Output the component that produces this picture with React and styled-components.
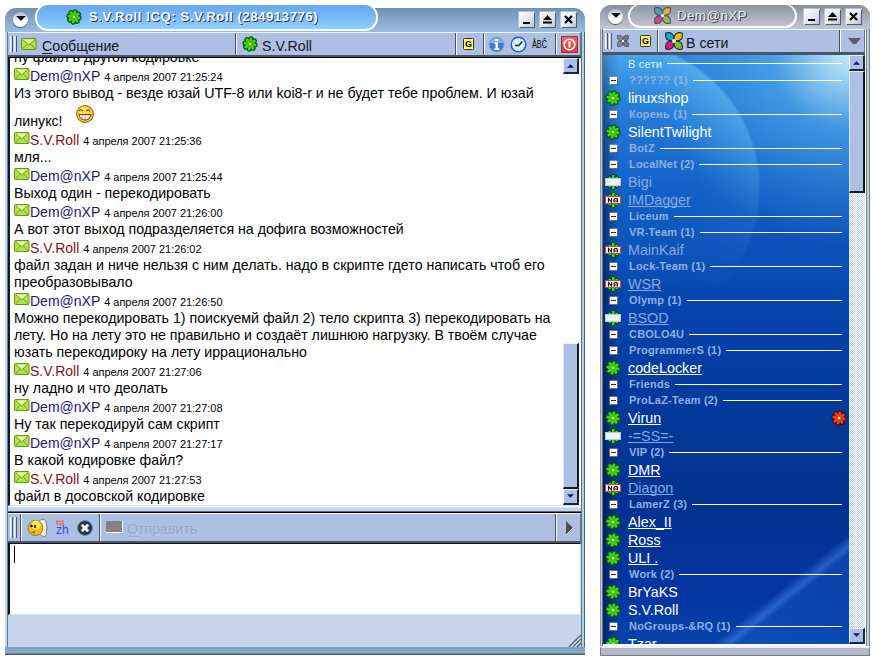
import React from "react";
import styled, { createGlobalStyle, css } from "styled-components";

const Global = createGlobalStyle`
  * { box-sizing: border-box; }
  body { margin: 0; background: #fff; font-family: "Liberation Sans", Arial, sans-serif; color: #000; }
`;

const Desktop = styled.main`
  display: flex;
  align-items: flex-start;
  width: 879px;
  height: 663px;
  padding: 5px 0 0 5px;
  overflow: hidden;
`;

const ChatWindow = styled.section`
  display: flex;
  flex-direction: column;
  width: 580px;
  height: 646px;
  margin-top: 3px;
  padding: 0 4px 0 3px;
  border-radius: 12px 12px 0 0;
  background: linear-gradient(90deg, #cfe2f2 0 1px, #b5d0e6 1px 2px, #5f82a0 2px 3px, transparent 3px 576px, #54778f 576px 577px, #b4cfe2 577px 579px, #456880 579px), #c6d6ec;
`;

const ChatTitle = styled.header`
  display: flex;
  align-items: center;
  flex: none;
  height: 24px;
  margin: 0 -4px 0 -3px;
  padding: 0 9px 0 8px;
  border-radius: 11px 11px 0 0;
  background: linear-gradient(#7190b0, #83a3c4 40%, #9bbcdc);
`;

const Pill = styled.div`
  display: flex;
  align-items: center;
  flex: none;
  width: ${(p) => p.$width}px;
  height: ${(p) => p.$height}px;
  margin-left: ${(p) => p.$left}px;
  margin-top: ${(p) => p.$top}px;
  padding-left: ${(p) => p.$pad}px;
  gap: ${(p) => p.$gap}px;
  border: 1px solid #fff;
  border-width: 1px 2px 2px 2px;
  border-radius: 13px;
  background: ${(p) => p.$fill};
  color: ${(p) => p.$color};
  font-size: ${(p) => p.$size}px;
  letter-spacing: ${(p) => p.$spacing || 0}px;
  font-weight: ${(p) => (p.$bold ? 700 : 400)};
  text-shadow: 1px 1px 0 ${(p) => p.$shadow}, 1px 0 0 ${(p) => p.$shadow2 || "transparent"};
  white-space: nowrap;
`;

const TitleButtons = styled.div`
  display: flex;
  gap: 6px;
  margin-left: auto;
  margin-top: -2px;
`;

const TitleButton = styled.span`
  display: grid;
  place-items: center;
  width: 15px;
  height: 15px;
  background: linear-gradient(135deg, #fff, #dfe6ee 60%, #b8c6d6);
  box-shadow: 1px 1px 0 #49627c, 0 0 0 0.5px #dce8f4;
`;

const RoundButton = styled.span`
  display: grid;
  place-items: center;
  flex: none;
  width: 15px;
  height: 15px;
  margin-top: -2px;
  border-radius: 50%;
  background: linear-gradient(#a9b9c9, #fff 65%);
  box-shadow: 0 1px 1px #445c74;
`;

const Toolbar = styled.div`
  display: flex;
  align-items: stretch;
  flex: none;
  height: ${(p) => p.$height}px;
  background: #adbfe3;
  border-top: 1px solid #eef4ff;
  border-bottom: 2px solid #48546a;
  border-right: 1px solid #65748c;
`;

const Grip = styled.div`
  flex: none;
  width: ${(p) => p.$width || 12}px;
  margin: 3px 0;
  background: linear-gradient(90deg, transparent 2px, #fff 2px 3px, #c8d5ee 3px 4px, #41587a 4px 5px, transparent 5px 6px, #fff 6px 7px, #c8d5ee 7px 8px, #41587a 8px 9px, transparent 9px);
`;

const Cell = styled.div`
  display: flex;
  align-items: center;
  flex: ${(p) => (p.$width ? "none" : 1)};
  width: ${(p) => (p.$width ? p.$width + "px" : "auto")};
  gap: ${(p) => p.$gap || 0}px;
  padding-left: ${(p) => p.$pad || 0}px;
  font-size: 14.2px;
  white-space: nowrap;
  ${(p) => p.$divided && css`
    border-left: 1px solid #44536b;
    box-shadow: inset 1px 0 0 #fff;
  `}
`;

const ToolLabel = styled.span`
  padding-top: ${(p) => p.$drop || 0}px;
  color: ${(p) => (p.$off ? "#99a9c6" : "#111827")};
  text-shadow: ${(p) => (p.$off ? "1px 1px 0 #b9c9e8" : "none")};
`;

const Hot = styled.span`
  text-decoration: underline;
  text-underline-offset: 2px;
`;

const LogFrame = styled.div`
  display: flex;
  flex: none;
  height: 449px;
  border-top: 1px solid #000;
  border-left: 2px solid #111820;
  border-bottom: 1px solid #d4e6f6;
  background: #fff;
`;

const Log = styled.div`
  flex: 1;
  height: 447px;
  overflow: hidden;
  padding-left: 4px;
  font-size: 14.2px;
  white-space: nowrap;
`;

const TextLine = styled.div`
  display: flex;
  height: ${(p) => (p.$smile ? 28 : 17)}px;
  padding-top: ${(p) => (p.$smile ? 11 : 0)}px;
  margin-top: ${(p) => (p.$clipped ? -8 : 0)}px;
  line-height: 15px;
`;

const SmileSlot = styled.span`
  height: 18px;
  margin: -9px 0 0 13px;
  line-height: 0;
`;

const MessageHead = styled.div`
  display: flex;
  align-items: baseline;
  height: 19px;
  line-height: 19px;
  font-size: 14px;
  color: ${(p) => (p.$mine ? "#8b1010" : "#1c1480")};
`;

const MailSlot = styled.span`
  align-self: flex-start;
  width: 16px;
  padding-top: 1px;
  line-height: 0;
`;

const Stamp = styled.time`
  margin-left: 4px;
  font-size: 11px;
  letter-spacing: -0.03px;
  color: #000;
`;

const ScrollBar = styled.div`
  display: flex;
  flex-direction: column;
  flex: none;
  width: ${(p) => p.$width}px;
  margin-right: ${(p) => p.$gap || 0}px;
  background: ${(p) => p.$track};
`;

const ScrollSpacer = styled.div`
  flex: 1;
`;

const ScrollButton = styled.div`
  display: grid;
  place-items: center;
  flex: none;
  height: 16px;
  background: #adbfe3;
  border: 1px solid #e8f0ff;
  border-right: 2px solid #1d2638;
  border-bottom: 2px solid #1d2638;
`;

const Thumb = styled.div`
  flex: none;
  height: ${(p) => p.$height}px;
  margin-top: ${(p) => p.$top || 0}px;
  background: #adbfe3;
  border-top: 1px solid #eef4ff;
  border-left: 1px solid #dbe6f8;
  border-right: 2px solid #10182a;
  border-bottom: 2px solid #10182a;
`;

const Splitter = styled.div`
  flex: none;
  height: 7px;
  background: linear-gradient(#fff 0 1px, #d0e2f4 1px 2px, #c6d6ec 2px 5px, #58667c 5px 6px, #000 6px);
`;

const Editor = styled.div`
  flex: none;
  height: 72px;
  border-top: 1px solid #10151c;
  border-left: 2px solid #10151c;
  border-right: 1px solid #d4e6f6;
  border-bottom: 1px solid #d4e6f6;
  background: #fff;
  padding: 2px 0 0 4px;
`;

const Caret = styled.div`
  width: 1px;
  height: 17px;
  background: #000;
`;

const Status = styled.div`
  display: flex;
  justify-content: flex-end;
  align-items: flex-end;
  flex: none;
  height: 32px;
  background: #c6d6ec;
`;

const ChatFoot = styled.div`
  flex: none;
  height: 8px;
  margin: 0 -4px 0 -3px;
  background: linear-gradient(#809fc0, #8dadcb 6px, #456078 7px);
`;

const ListWindow = styled.section`
  display: flex;
  flex-direction: column;
  width: 270px;
  height: 650px;
  margin-left: 15px;
  padding: 0 5px 0 3px;
  border-radius: 11px 11px 0 0;
  background: linear-gradient(90deg, #9299a4 0 1px, #c5cbd4 1px 2px, #65717e 2px 3px, transparent 3px 265px, #fff 265px 266px, #78808e 266px 267px, #c5cad6 267px 269px, #777e8c 269px);
`;

const ListTitle = styled.header`
  display: flex;
  align-items: center;
  flex: none;
  height: 24px;
  margin: 0 -5px 0 -3px;
  padding: 0 9px 0 8px;
  border-radius: 11px 11px 0 0;
  background: linear-gradient(#898f98, #a7adb7 50%, #c1c8d3);
`;

const ListBody = styled.div`
  display: flex;
  flex: none;
  height: 592px;
  border-top: 1px solid #4a5666;
  border-bottom: 2px solid #fff;
`;

const Roster = styled.div`
  position: relative;
  isolation: isolate;
  flex: none;
  width: 246px;
  overflow: hidden;
  background:
    linear-gradient(90deg, rgba(0, 20, 70, 0.6), rgba(0, 20, 70, 0.25) 8px, transparent 16px),
    linear-gradient(141deg, transparent 0 86%, rgba(70, 140, 240, 0.5) 87.6%, rgba(30, 100, 210, 0.3) 88.6%, rgba(30, 110, 220, 0.15) 100%),
    radial-gradient(circle 190px at 246px 0px, rgba(215, 245, 255, 0.9), rgba(110, 195, 245, 0.45) 40%, transparent),
    linear-gradient(#2382da 0, #1a6cd0 70px, #0f5cc4 130px, #0b50b8 200px, #0644ac 260px, #033a9c 340px, #033292 450px, #0535a0 540px, #0644ac 590px);

  &::before {
    content: "";
    position: absolute;
    inset: 0 0 auto 0;
    z-index: -1;
    height: 260px;
    background: radial-gradient(circle at 10px 133px, rgba(90, 190, 255, 0.18) 0 80px, rgba(120, 210, 255, 0.5) 145px, transparent 148px);
    mask-image: linear-gradient(#000, rgba(0, 0, 0, 0.7) 70px, rgba(0, 0, 0, 0.25) 150px, transparent 240px);
  }
`;

const GroupRow = styled.div`
  display: flex;
  align-items: center;
  height: ${(p) => (p.$root ? 17 : 16)}px;
  padding: 0 7px 0 ${(p) => (p.$root ? 25 : 7)}px;
  color: ${(p) => (p.$root ? "#d9efff" : "#8eb0e2")};
  font-size: 11px;
  font-weight: ${(p) => (p.$root ? 400 : 700)};
  letter-spacing: 0.2px;
  white-space: nowrap;
`;

const GroupName = styled.span`
  margin-right: 5px;
`;

const Rule = styled.span`
  flex: 1;
  height: 1px;
  background: #fffef0;
`;

const Minus = styled.span`
  display: grid;
  place-items: center;
  width: 7px;
  height: 7px;
  margin-right: 12px;
  background: #fff8ec;
  box-shadow: 0 0 0 0.5px #b9b1a4, 1px 1px 0 #182848;

  &::before {
    content: "";
    width: 5px;
    height: 1px;
    background: #402020;
  }
`;

const ContactRow = styled.div`
  display: flex;
  align-items: center;
  height: 18px;
  padding: 1px 2px 0 2px;
  gap: 7px;
  font-size: 14.3px;
  line-height: 17px;
  white-space: nowrap;
  color: ${(p) => (p.$away ? "#86a9e0" : "#fff")};
`;

const ContactName = styled.span`
  flex: 1;
  padding-top: 2px;
  text-decoration: ${(p) => (p.$linked ? "underline" : "none")};
  text-decoration-skip-ink: none;
  text-underline-offset: 1px;
`;

const ListFoot = styled.div`
  flex: none;
  height: 10px;
  margin: 0 -5px 0 -3px;
  border: 1px solid #777e8c;
  border-top: 2px solid #eef1f6;
  background: #b5bac8;
`;

function Flower({ red }) {
  const dark = red ? "#4c0804" : "#064a06";
  const petal = red ? "#ee4420" : "#3bdc20";
  const angles = [0, 45, 90, 135, 180, 225, 270, 315];
  return (
    <svg width="16" height="16" viewBox="0 0 16 16">
      {angles.map((a) => (
        <ellipse key={a} cx="8" cy="3.5" rx="2.7" ry="3.3" fill={dark} transform={`rotate(${a + 10} 8 8)`} />
      ))}
      {angles.map((a) => (
        <ellipse key={a} cx="8" cy="4" rx="1.7" ry="2.9" fill={petal} stroke={dark} strokeWidth=".25" transform={`rotate(${a + 10} 8 8)`} />
      ))}
      <circle cx="8" cy="8" r="1.8" fill="#ffe45c" stroke={red ? "#a32b06" : "#3e9c0c"} strokeWidth=".5" />
    </svg>
  );
}

function Plate({ na }) {
  return (
    <svg width="16" height="16" viewBox="0 0 16 16">
      <path d="M3 2.500h2V1h2V0h3v1h2v1.500h2v11h-2V15h-2v1H7v-1H5v-1.500H3z" fill="#0b4a10" />
      <path d="M3.500 3h2.500v10H3.500zM7 1h2.500v14H7zM10.500 3h2.500v10h-2.500z" fill="#35d622" />
      <rect x=".5" y="4.500" width="15" height="7" fill={na ? "#fff0e8" : "#eef2fa"} stroke={na ? "#d8453c" : "#b9c6dc"} />
      {na && <path d="M3.500 10.500V6.500l3 3.500V6M9 10.500V7.500l1-1h1.500l1 1v3M9 9h3.500" fill="none" stroke="#111" strokeWidth="1.100" />}
    </svg>
  );
}

const Mail = () => (
  <svg width="16" height="13" viewBox="0 0 16 13">
    <rect x=".5" y=".5" width="14.500" height="11" rx="1" fill="#b4e04c" stroke="#5c9a16" />
    <path d="M1.500 1.500 7.700 7 14 1.500M1.500 11 6 6M14 11 9.500 6" fill="none" stroke="#6ea820" />
    <path d="M2.500 1.400h10.500L7.700 5.900z" fill="#e6f6a4" />
  </svg>
);

const Smile = () => (
  <svg width="18" height="18" viewBox="0 0 18 18">
    <circle cx="9" cy="9" r="8.400" fill="#fbc92c" stroke="#8a5708" />
    <circle cx="8" cy="6.500" r="5" fill="#ffe768" opacity=".8" />
    <path d="M3 6q2-2.500 4 0M10 6q2-2.500 4 0" fill="none" stroke="#5a3500" />
    <path d="M3 9.500h12q-1 5.500-6 5.500T3 9.500z" fill="#fff" stroke="#5a3500" strokeWidth=".9" />
    <path d="M6 10v4M9 10v5M12 10v4" stroke="#8a6a3c" strokeWidth=".7" />
  </svg>
);

const GText = styled.text`
  font: 700 9px "Liberation Sans", sans-serif;
`;

const GIcon = () => (
  <svg width="11" height="12" viewBox="0 0 11 12">
    <rect x=".5" y=".5" width="10" height="11" rx="1" fill="#fdf870" stroke="#34371c" />
    <GText x="2" y="9.300">G</GText>
  </svg>
);

const Info = () => (
  <svg width="17" height="17" viewBox="0 0 17 17">
    <circle cx="8.500" cy="8.500" r="7.700" fill="#3f7fca" stroke="#8ab4e4" />
    <path d="M2 7a6.600 6 0 0 1 13 0z" fill="#86b4e6" />
    <path d="M7.300 3h2.600v2.200H7.300zM6.500 6.500h3.400v5.800h1.300V14H6.300v-1.700h1.200V8H6.500z" fill="#fff" />
  </svg>
);

const Clock = () => (
  <svg width="17" height="17" viewBox="0 0 17 17">
    <circle cx="8.500" cy="8.500" r="7.300" fill="#dff1ff" stroke="#2463a8" strokeWidth="1.400" />
    <circle cx="8.500" cy="8.500" r="5.500" fill="none" stroke="#79aee0" strokeDasharray="1 2" />
    <path d="M5 9.500h4l3-4M9 9.500l3-3.500" fill="none" stroke="#12325c" strokeWidth="1.400" />
  </svg>
);

const AbcText = styled.text`
  font: 10px "Liberation Sans", sans-serif;
`;

const Abc = () => (
  <svg width="16" height="16" viewBox="0 0 16 16">
    <AbcText x="0" y="12" textLength="15" lengthAdjust="spacingAndGlyphs">ÅBĈ</AbcText>
  </svg>
);

const Power = () => (
  <svg width="17" height="17" viewBox="0 0 17 17">
    <rect x=".5" y=".5" width="16" height="16" fill="#e14444" stroke="#a92a32" />
    <path d="M1 1h15v7H1z" fill="#ef7474" opacity=".6" />
    <circle cx="8.500" cy="8.500" r="5.300" fill="none" stroke="#fff" strokeWidth="1.600" />
    <path d="M8.500 5.500v6" stroke="#fff" strokeWidth="2" />
  </svg>
);

function Petals({ size, gray, dim }) {
  const c = gray ? ["#858b95", "#747b87", "#858b95", "#747b87"] : ["#18a9d0", "#f4bd18", "#d8177c", "#7bc62b"];
  const leaf = "M7.700 7.700C3.500 8.400.7 6.800.6 3.800.6 2.600.5 1.500.8.8 1.500.5 2.600.6 3.800.6 6.800.7 8.400 3.500 7.700 7.700z";
  return (
    <svg width={size} height={size} viewBox="0 0 16 16" opacity={dim ? 0.7 : 1}>
      {[0, 90, 270, 180].map((a, i) => (
        <path key={a} d={leaf} fill={c[i]} stroke="#252b34" strokeWidth={gray ? 0.8 : 1} transform={`rotate(${a} 8 8)`} />
      ))}
      <circle cx="8" cy="8" r="1.700" fill="#f3f5f8" />
    </svg>
  );
}

const arrowPaths = { up: "M4 1 8 5H0z", down: "M0 0h8L4 4z" };

const Arrow = ({ dir, big }) => (
  <svg width={big ? 10 : 7} height={big ? 6 : 5} viewBox="0 0 8 5">
    <path d={arrowPaths[dir]} fill={big ? "#000" : "#0c1c68"} />
  </svg>
);

const MinIcon = () => <svg width="11" height="11"><path d="M2 8h7v2H2z" /></svg>;
const MaxIcon = () => <svg width="11" height="11"><path d="M5.500 1 10 6H1zM1 7.500h9v2H1z" /></svg>;
const CloseIcon = () => <svg width="11" height="11"><path d="M2 2 9 9M9 2 2 9" stroke="#000" strokeWidth="2.200" /></svg>;

const Fish = () => (
  <svg width="21" height="20" viewBox="0 0 21 20">
    <path d="M12 3q6-4 7 1l1 5-1 9q-3 2-7-3z" fill="#f6f3e5" stroke="#887f69" />
    <circle cx="8.500" cy="10" r="7.500" fill="#f4bd16" stroke="#8d6409" strokeWidth=".8" />
    <circle cx="9" cy="7" r="4.500" fill="#ffe75c" />
    <circle cx="4.500" cy="8" r="1.300" fill="#111" />
    <path d="M8 7v3" stroke="#111" strokeWidth="1.600" />
    <path d="M2 12q3 3 7 0l-2 4z" fill="#b26012" />
  </svg>
);

const ZhText = styled.text`
  font: 12px "Liberation Sans", sans-serif;
  fill: #3c48d0;
`;

const Zh = () => (
  <svg width="15" height="15" viewBox="0 0 15 15">
    <path d="M2 0v5M5 0v6M8 0v5M1 1.500h8M1 4h8" stroke="#ef6b58" fill="none" />
    <ZhText x="1" y="13.500">zh</ZhText>
  </svg>
);

const Cancel = () => (
  <svg width="16" height="16" viewBox="0 0 16 16">
    <circle cx="8" cy="8" r="7.300" fill="#26334e" stroke="#5c6d8c" />
    <path d="M4.800 4.800 11.200 11.200M11.200 4.800 4.800 11.200" stroke="#fff" strokeWidth="2.800" />
  </svg>
);

const SendIcon = () => (
  <svg width="18" height="13"><path d="M0 0h17v12H0z" fill="#fff" /><path d="M0 0h16v11H0z" fill="#808488" /></svg>
);

const PlayIcon = () => (
  <svg width="9" height="14"><path d="M1 0 8 7 1 14z" fill="#4a5058" /><path d="M8 7 1 14" stroke="#e0e8f4" /></svg>
);

const DropIcon = () => <svg width="13" height="8"><path d="M0 1h13L8 7H5z" fill="#5a5f63" /></svg>;

const ResizeIcon = () => (
  <svg width="13" height="12"><path d="M1 12 13 0M5 12 13 4M9 12 13 8" stroke="#405468" strokeWidth="1.400" /><path d="M2.500 12 13 1.500M6.500 12 13 5.500" stroke="#fff" strokeWidth=".8" /></svg>
);

const messages = [
  { from: "Dem@nXP", at: "21:25:24", lines: ["Из этого вывод - везде юзай UTF-8 или koi8-r и не будет тебе проблем. И юзай"], smile: "линукс!" },
  { from: "S.V.Roll", at: "21:25:36", lines: ["мля..."] },
  { from: "Dem@nXP", at: "21:25:44", lines: ["Выход один - перекодировать"] },
  { from: "Dem@nXP", at: "21:26:00", lines: ["А вот этот выход подразделяется на дофига возможностей"] },
  { from: "S.V.Roll", at: "21:26:02", lines: ["файл задан и ниче нельзя с ним делать. надо в скрипте гдето написать чтоб его", "преобразовывало"] },
  { from: "Dem@nXP", at: "21:26:50", lines: ["Можно перекодировать 1) поискуемй файл 2) тело скрипта 3) перекодировать на", "лету. Но на лету это не правильно и создаёт лишнюю нагрузку. В твоём случае", "юзать перекодироку на лету иррационально"] },
  { from: "S.V.Roll", at: "21:27:06", lines: ["ну ладно и что деолать"] },
  { from: "Dem@nXP", at: "21:27:08", lines: ["Ну так перекодируй сам скрипт"] },
  { from: "Dem@nXP", at: "21:27:17", lines: ["В какой кодировке файл?"] },
  { from: "S.V.Roll", at: "21:27:53", lines: ["файл в досовской кодировке"] },
];

const roster = [
  { group: "?????? (1)" },
  { name: "linuxshop" },
  { group: "Корень (1)" },
  { name: "SilentTwilight" },
  { group: "BotZ" },
  { group: "LocalNet (2)" },
  { name: "Bigi", state: "away" },
  { name: "IMDagger", state: "na", linked: true },
  { group: "Liceum" },
  { group: "VR-Team (1)" },
  { name: "MainKaif", state: "na" },
  { group: "Lock-Team (1)" },
  { name: "WSR", state: "na", linked: true },
  { group: "Olymp (1)" },
  { name: "BSOD", state: "away", linked: true },
  { group: "CBOLO4U" },
  { group: "ProgrammerS (1)" },
  { name: "codeLocker", linked: true },
  { group: "Friends" },
  { group: "ProLaZ-Team (2)" },
  { name: "Virun", linked: true, mark: true },
  { name: "-=SS=-", state: "away", linked: true },
  { group: "VIP (2)" },
  { name: "DMR", linked: true },
  { name: "Diagon", state: "na", linked: true },
  { group: "LamerZ (3)" },
  { name: "Alex_II", linked: true },
  { name: "Ross", linked: true },
  { name: "ULI .", linked: true },
  { group: "Work (2)" },
  { name: "BrYaKS" },
  { name: "S.V.Roll" },
  { group: "NoGroups-&RQ (1)" },
  { name: "Tzar" },
];

const WindowButtons = () => (
  <TitleButtons>
    <TitleButton><MinIcon /></TitleButton>
    <TitleButton><MaxIcon /></TitleButton>
    <TitleButton><CloseIcon /></TitleButton>
  </TitleButtons>
);

function Chat() {
  return (
    <ChatWindow>
      <ChatTitle>
        <RoundButton><Arrow dir="down" big /></RoundButton>
        <Pill $width={343} $height={27} $left={7} $top={-6} $pad={29} $gap={7} $fill="linear-gradient(#66a7ee, #7cbcfc 60%, #8fd0ff)" $color="#fff" $size={13} $spacing={0.63} $bold $shadow="#1f3a5c">
          <Flower />
          <span>S.V.Roll ICQ: S.V.Roll (284913776)</span>
        </Pill>
        <WindowButtons />
      </ChatTitle>
      <Toolbar $height={25}>
        <Grip />
        <Cell $width={215} $pad={1} $gap={5}><Mail /><ToolLabel $drop={3}><Hot>С</Hot>ообщение</ToolLabel></Cell>
        <Cell $divided $pad={6} $gap={4}><Flower /><ToolLabel $drop={3}>S.V.Roll</ToolLabel></Cell>
        <Cell $divided $width={28} $pad={7}><GIcon /></Cell>
        <Cell $divided $width={72} $pad={4} $gap={5}><Info /><Clock /><Abc /></Cell>
        <Cell $divided $width={25} $pad={5}><Power /></Cell>
      </Toolbar>
      <LogFrame>
        <Log>
          <TextLine $clipped>ну файл в другой кодировке</TextLine>
          {messages.map((m) => (
            <React.Fragment key={m.at}>
              <MessageHead $mine={m.from === "S.V.Roll"}>
                <MailSlot><Mail /></MailSlot>
                {m.from}
                <Stamp>4 апреля 2007 {m.at}</Stamp>
              </MessageHead>
              {m.lines.map((l) => <TextLine key={l}>{l}</TextLine>)}
              {m.smile && <TextLine $smile>{m.smile}<SmileSlot><Smile /></SmileSlot></TextLine>}
            </React.Fragment>
          ))}
        </Log>
        <ScrollBar $width={16} $gap={2} $track="#fdfeff">
          <ScrollButton><Arrow dir="up" /></ScrollButton>
          <Thumb $top={269} $height={146} />
          <ScrollButton><Arrow dir="down" /></ScrollButton>
        </ScrollBar>
      </LogFrame>
      <Splitter />
      <Toolbar $height={30}>
        <Grip />
        <Cell $divided $width={79} $pad={6} $gap={7}><Fish /><Zh /><Cancel /></Cell>
        <Cell $divided $pad={6} $gap={3}><SendIcon /><ToolLabel $off $drop={3}><Hot>О</Hot>тправить</ToolLabel></Cell>
        <Cell $divided $width={25} $pad={9}><PlayIcon /></Cell>
      </Toolbar>
      <Editor><Caret /></Editor>
      <Status><ResizeIcon /></Status>
      <ChatFoot />
    </ChatWindow>
  );
}

function StatusIcon({ state }) {
  if (!state) return <Flower />;
  return <Plate na={state === "na"} />;
}

function Contacts() {
  return (
    <ListWindow>
      <ListTitle>
        <RoundButton><Arrow dir="down" big /></RoundButton>
        <Pill $width={169} $height={24} $left={5} $top={-2} $pad={24} $gap={6} $fill="linear-gradient(#8e949d, #abb1ba 60%, #bec4ce)" $color="#eceef1" $size={13.5} $spacing={0.3} $shadow="#3e4650" $shadow2="#5a626c">
          <Petals size={17} dim />
          <span>Dem@nXP</span>
        </Pill>
        <WindowButtons />
      </ListTitle>
      <Toolbar $height={25}>
        <Grip $width={14} />
        <Cell $width={40} $gap={11}><Petals size={12} gray /><GIcon /></Cell>
        <Cell $divided $pad={7} $gap={3}><Petals size={18} /><ToolLabel $drop={3}>В сети</ToolLabel></Cell>
        <Cell $divided $width={25} $pad={8}><DropIcon /></Cell>
      </Toolbar>
      <ListBody>
        <Roster>
          <GroupRow $root><GroupName>В сети</GroupName><Rule /></GroupRow>
          {roster.map((r, i) => r.group ? (
            <GroupRow key={i}><Minus /><GroupName>{r.group}</GroupName><Rule /></GroupRow>
          ) : (
            <ContactRow key={i} $away={!!r.state}>
              <StatusIcon state={r.state} />
              <ContactName $linked={r.linked}>{r.name}</ContactName>
              {r.mark && <Flower red />}
            </ContactRow>
          ))}
        </Roster>
        <ScrollBar $width={16} $track="repeating-conic-gradient(#b9d2ee 0 25%, #fff 0 50%) 0 0 / 2px 2px">
          <ScrollButton><Arrow dir="up" /></ScrollButton>
          <Thumb $height={122} />
          <ScrollSpacer />
          <ScrollButton><Arrow dir="down" /></ScrollButton>
        </ScrollBar>
      </ListBody>
      <ListFoot />
    </ListWindow>
  );
}

export default function App() {
  return (
    <>
      <Global />
      <Desktop>
        <Chat />
        <Contacts />
      </Desktop>
    </>
  );
}
